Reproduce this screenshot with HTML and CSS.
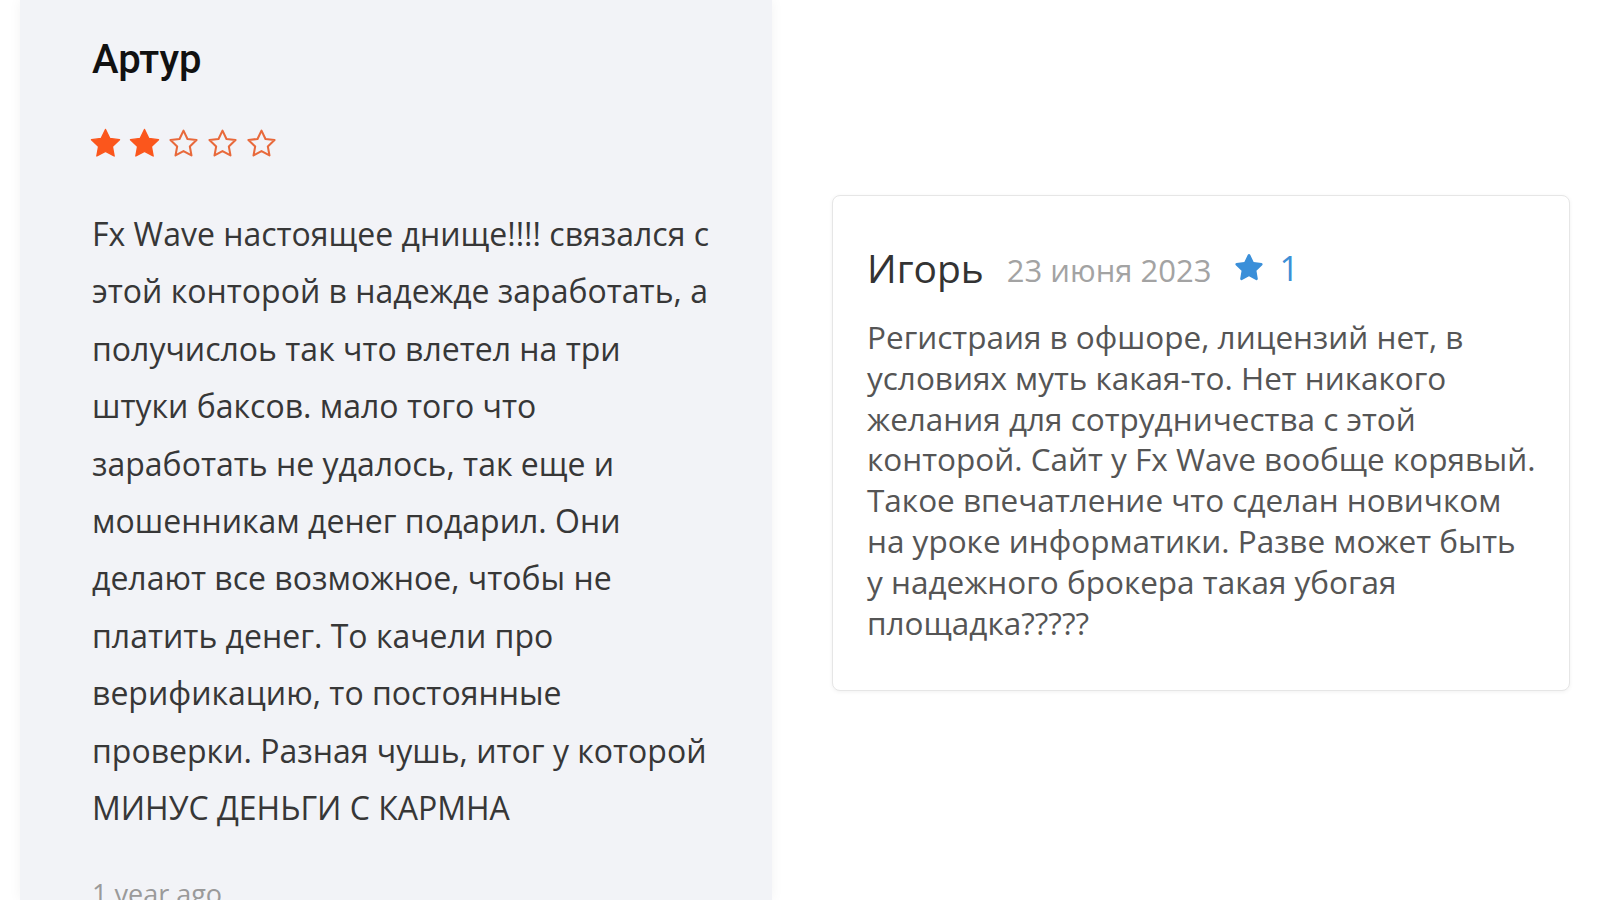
FILE: index.html
```html
<!DOCTYPE html>
<html lang="ru">
<head>
<meta charset="utf-8">
<title>Отзывы</title>
<link rel="stylesheet" href="styles.css">
</head>
<body>
<main class="page">
  <article class="review-card">
    <h2 class="author">Артур</h2>
    <div class="stars">
      <svg class="star" viewBox="0 0 24 24"><path class="fill" d="M12 1.8l3.1 6.5 7.1.9-5.2 4.9 1.3 7-6.3-3.4-6.3 3.4 1.3-7L1.8 9.2l7.1-.9z"/></svg>
      <svg class="star" viewBox="0 0 24 24"><path class="fill" d="M12 1.8l3.1 6.5 7.1.9-5.2 4.9 1.3 7-6.3-3.4-6.3 3.4 1.3-7L1.8 9.2l7.1-.9z"/></svg>
      <svg class="star" viewBox="0 0 24 24"><path class="empty" d="M12 2.6l2.9 6.1 6.6.8-4.9 4.6 1.2 6.6-5.8-3.2-5.8 3.2 1.2-6.6-4.9-4.6 6.6-.8z"/></svg>
      <svg class="star" viewBox="0 0 24 24"><path class="empty" d="M12 2.6l2.9 6.1 6.6.8-4.9 4.6 1.2 6.6-5.8-3.2-5.8 3.2 1.2-6.6-4.9-4.6 6.6-.8z"/></svg>
      <svg class="star" viewBox="0 0 24 24"><path class="empty" d="M12 2.6l2.9 6.1 6.6.8-4.9 4.6 1.2 6.6-5.8-3.2-5.8 3.2 1.2-6.6-4.9-4.6 6.6-.8z"/></svg>
    </div>
    <p class="review-text">Fx Wave настоящее днище!!!! связался с этой конторой в надежде заработать, а получислоь так что влетел на три штуки баксов. мало того что заработать не удалось, так еще и мошенникам денег подарил. Они делают все возможное, чтобы не платить денег. То качели про верификацию, то постоянные проверки. Разная чушь, итог у которой МИНУС ДЕНЬГИ С КАРМНА</p>
    <div class="ago">1 year ago</div>
  </article>

  <section class="side">
    <article class="comment-card">
      <header class="comment-head">
        <span class="comment-name">Игорь</span>
        <span class="comment-date">23 июня 2023</span>
        <span class="comment-rating">
          <svg class="blue-star" viewBox="0 0 24 24"><path d="M12 1.5c.4 0 .7.2.9.6l2.6 5.4 5.9.8c.8.1 1.1 1.1.5 1.7l-4.3 4.1 1 5.9c.1.8-.7 1.4-1.4 1l-5.2-2.8-5.2 2.8c-.7.4-1.5-.2-1.4-1l1-5.9-4.3-4.1c-.6-.6-.3-1.6.5-1.7l5.9-.8 2.6-5.4c.2-.4.5-.6.9-.6z"/></svg>
          <span class="rating-num">1</span>
        </span>
      </header>
      <p class="comment-text">Регистраия в офшоре, лицензий нет, в<br>условиях муть какая-то. Нет никакого<br>желания для сотрудничества с этой<br>конторой. Сайт у Fx Wave вообще корявый.<br>Такое впечатление что сделан новичком<br>на уроке информатики. Разве может быть<br>у надежного брокера такая убогая<br>площадка?????</p>
    </article>
  </section>
</main>
</body>
</html>
```

FILE: styles.css
```css
* {
  box-sizing: border-box;
}

html, body {
  margin: 0;
  padding: 0;
  background: #ffffff;
  overflow: hidden;
}

body {
  width: 1600px;
  height: 900px;
  font-family: "Open Sans", "Noto Sans", sans-serif;
}

.page {
  display: flex;
  align-items: flex-start;
  gap: 60px;
  padding-left: 20px;
}

.review-card {
  width: 752px;
  height: 900px;
  overflow: hidden;
  background: #f2f3f7;
  padding: 36px 56px 0 72px;
  box-shadow: 0 0 12px rgba(0, 0, 0, 0.05);
}

.author {
  margin: 0;
  font-family: Roboto, "Liberation Sans", sans-serif;
  font-weight: 500;
  font-size: 40px;
  line-height: 48px;
  color: #111111;
}

.stars {
  display: flex;
  gap: 6px;
  margin-top: 43px;
  height: 33px;
  margin-left: -3px;
}

.star {
  width: 33px;
  height: 33px;
}

.star .fill {
  fill: #fb561c;
  stroke: #fb561c;
  stroke-width: 1;
  stroke-linejoin: round;
}

.star .empty {
  fill: none;
  stroke: #e8693b;
  stroke-width: 1.5;
  stroke-linejoin: round;
}

.review-text {
  margin: 45px 0 0;
  font-size: 32px;
  line-height: 57.4px;
  color: #373737;
}

.ago {
  margin-top: 40px;
  font-size: 27px;
  line-height: 36px;
  color: #9a9a9a;
}

.side {
  padding-top: 195px;
}

.comment-card {
  width: 738px;
  height: 496px;
  background: #ffffff;
  border: 1px solid #e6e6e6;
  border-radius: 8px;
  box-shadow: 0 1px 4px rgba(0, 0, 0, 0.06);
  padding: 47px 20px 0 34px;
}

.comment-head {
  display: flex;
  align-items: center;
  height: 50px;
}

.comment-name {
  font-size: 39px;
  line-height: 50px;
  color: #333333;
}

.comment-date {
  margin-left: 23px;
  font-size: 31px;
  line-height: 50px;
  color: #a3a3a3;
  position: relative;
  top: 2px;
}

.comment-rating {
  display: flex;
  align-items: center;
  margin-left: 22px;
  color: #3d8fd6;
}

.blue-star {
  width: 32px;
  height: 32px;
  fill: #3a8fd9;
}

.rating-num {
  margin-left: 14px;
  font-size: 34px;
  line-height: 50px;
}

.comment-text {
  margin: 24px 0 0;
  font-size: 31.5px;
  line-height: 40.8px;
  color: #555555;
}
```
